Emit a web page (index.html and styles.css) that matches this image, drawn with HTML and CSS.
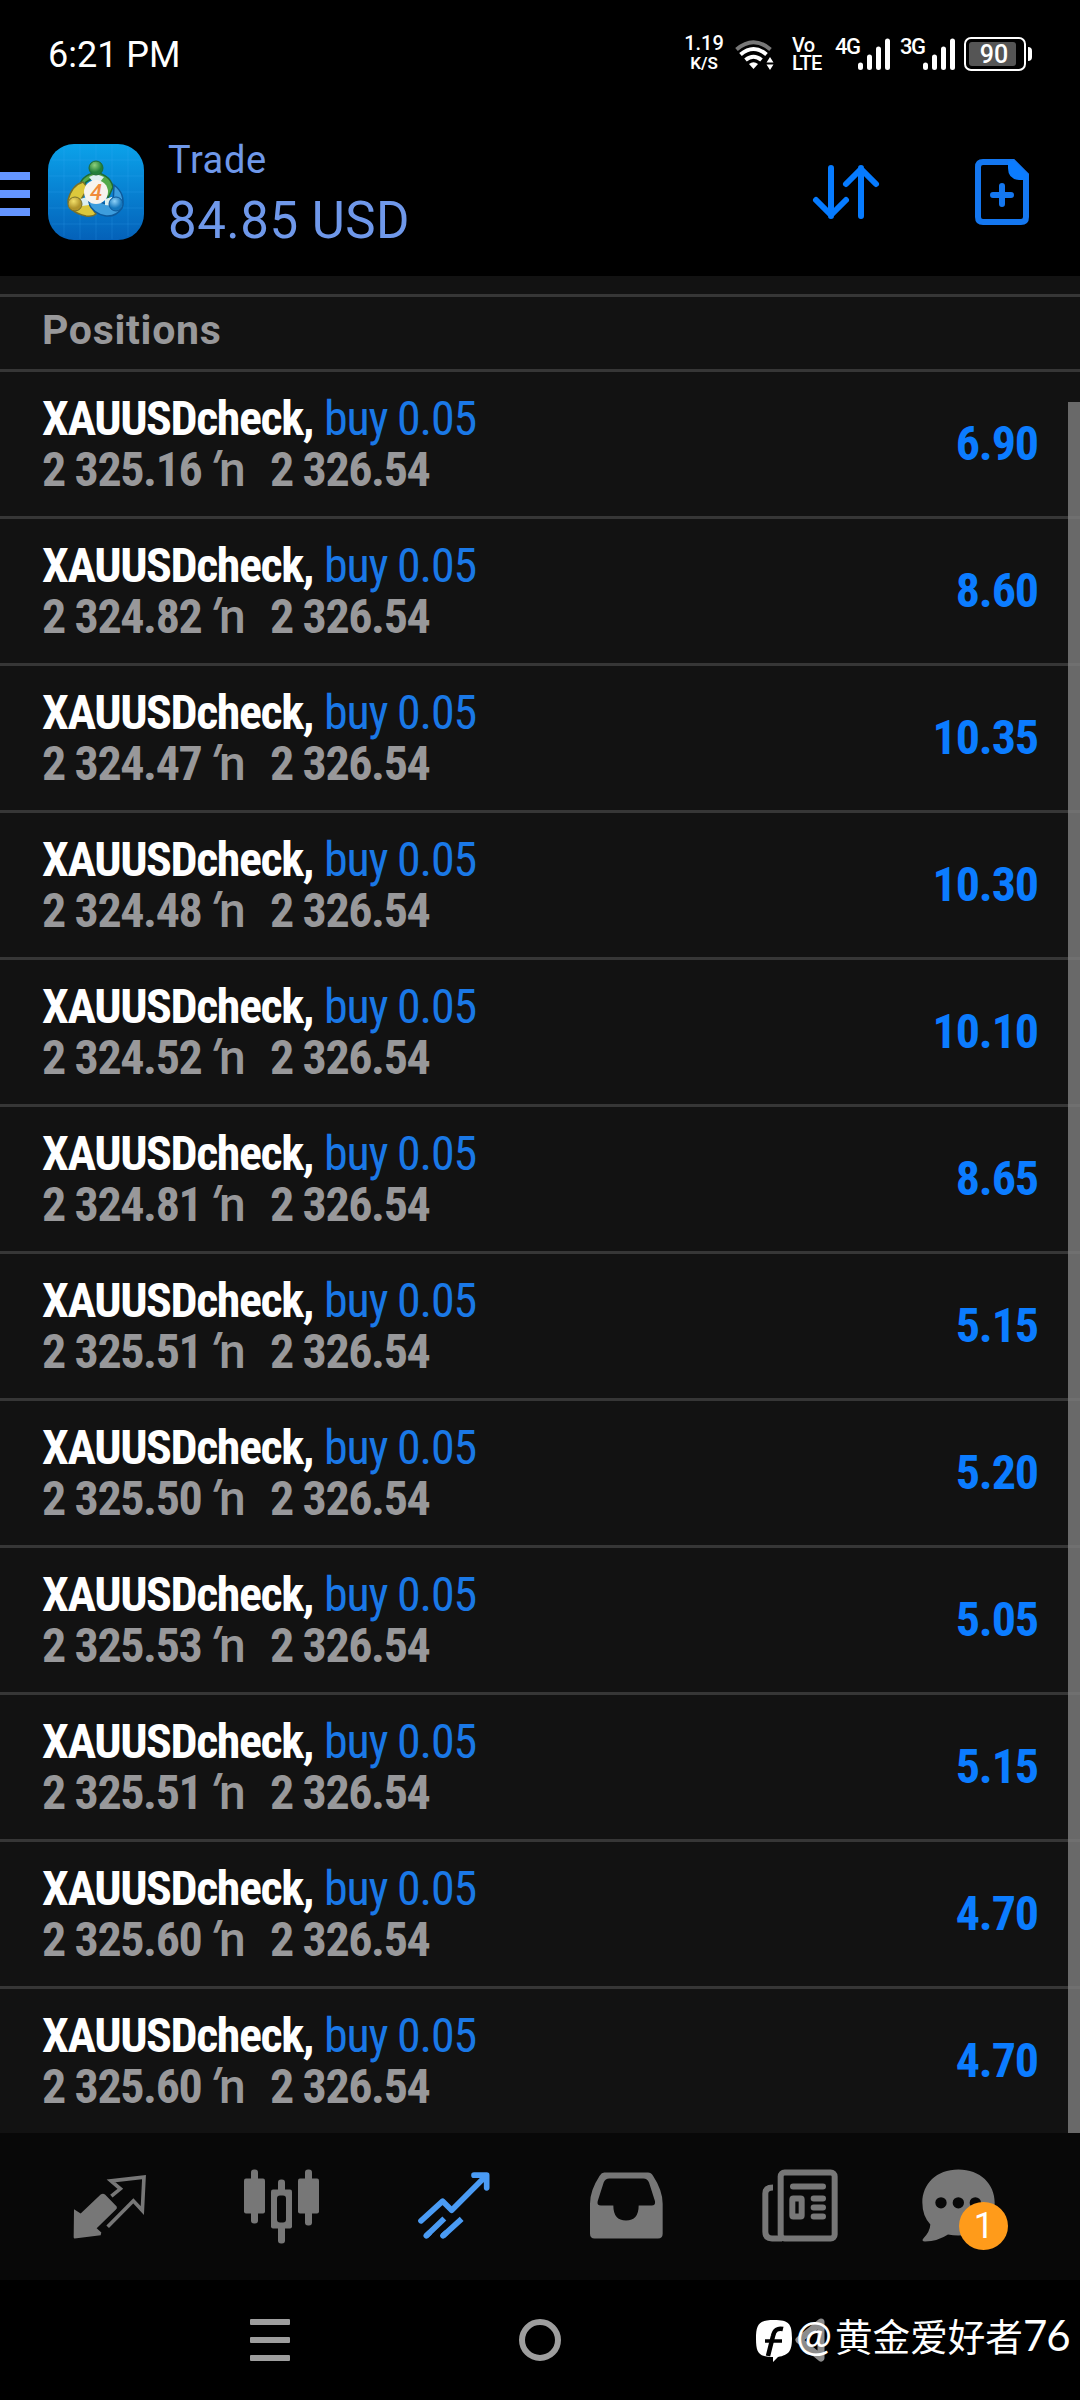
FILE: index.html
```html
<!DOCTYPE html>
<html lang="en">
<head>
    <meta charset="UTF-8">
    <meta name="viewport" content="width=device-width, initial-scale=1.0">
    <title>Trade</title>
    <link rel="stylesheet" href="styles.css">
</head>
<body>

    <div class="status-bar">
        <span class="time">6:21 PM</span>
        <div class="status-icons">
            <div class="stacked speed"><span>1.19</span><span class="small">K/S</span></div>
            <svg class="wifi" width="40" height="34" viewBox="0 0 40 34">
                <g fill="none" stroke="#fff" stroke-width="4">
                    <path d="M1.500 12.500 Q18.500 -2 35.500 12.500" stroke="#777"/>
                    <path d="M5.500 17.500 Q18.500 6.500 31.500 17.500"/>
                    <path d="M10.500 23 Q18.500 16.500 26.500 23"/>
                </g>
                <path d="M14 27 Q18.500 23.500 23 27 L18.500 32Z" fill="#fff"/>
                <path d="M31.500 25.500 L35 20 L38.500 25.500Z M31.500 27.500 L35 33 L38.500 27.500Z" fill="#fff"/>
            </svg>
            <div class="stacked volte"><span>Vo</span><span>LTE</span></div>
            <div class="signal">
                <span>4G</span>
                <svg width="32" height="34" viewBox="0 0 32 34"><path d="M2.500 28v2.500M11.500 20v10.500M20.500 12v18.500M29.500 4v26.500" stroke="#fff" stroke-width="5" stroke-linecap="round"/></svg>
            </div>
            <div class="signal second">
                <span>3G</span>
                <svg width="32" height="34" viewBox="0 0 32 34"><path d="M2.500 28v2.500M11.500 20v10.500M20.500 12v18.500M29.500 4v26.500" stroke="#fff" stroke-width="5" stroke-linecap="round"/></svg>
            </div>
            <div class="battery"><span>90</span></div>
            <div class="battery-tip"></div>
        </div>
    </div>

    <header class="header">
        <div class="menu"><i></i><i></i><i></i></div>
        <svg class="logo" width="96" height="96" viewBox="0 0 96 96">
            <defs>
                <linearGradient id="sky" x1="0" y1="0" x2="0" y2="1"><stop offset="0" stop-color="#0ba2ea"/><stop offset="1" stop-color="#0461b9"/></linearGradient>
                <radialGradient id="green" cx=".4" cy=".3"><stop offset="0" stop-color="#8fd07c"/><stop offset="1" stop-color="#21803a"/></radialGradient>
                <radialGradient id="gold" cx=".4" cy=".3"><stop offset="0" stop-color="#f3e06a"/><stop offset="1" stop-color="#b1942b"/></radialGradient>
                <radialGradient id="blue" cx=".4" cy=".3"><stop offset="0" stop-color="#8fd2f8"/><stop offset="1" stop-color="#1577bd"/></radialGradient>
            </defs>
            <rect width="96" height="96" rx="26" fill="url(#sky)"/>
            <path d="M16 4v88M32 1v94M48 0v96M64 1v94M80 4v88M4 16h88M1 32h94M0 48h96M1 64h94M4 80h88" stroke="#47b4ff" stroke-opacity=".18"/>
            <path d="M31 50 A17 17 0 1 1 65 43 L60 54 L48 32 L38 38Z" fill="#54a94a" stroke="#1f6b35" stroke-width="1.500"/>
            <path d="M35 38 Q24 41 20 56 Q20 68 38 72 Q45 73 48 70 L40 58 L29 62 L40 44Z" fill="#dcc83c" stroke="#77702a" stroke-width="1.500"/>
            <path d="M66 41 Q78 50 74 64 Q68 73 58 72 Q45 70 40 58 L52 58 L65 62Z" fill="#3d9ddd" stroke="#0d5a9c" stroke-width="1.500"/>
            <path d="M41 33l7-3 8 3-4 5h-7zM32 55l7-2 2 8-7 1zM57 55l7-2 1 9-8-1z" fill="#dceff0"/>
            <circle cx="48" cy="24" r="7" fill="url(#green)" stroke="#1f6b35"/>
            <circle cx="27" cy="60" r="7" fill="url(#gold)" stroke="#77702a"/>
            <circle cx="68" cy="60" r="7" fill="url(#blue)" stroke="#0d5a9c"/>
            <circle cx="48" cy="48" r="12" fill="#f7f3ee"/>
            <text x="48" y="56" class="logo-digit">4</text>
        </svg>
        <div class="title">
            <span class="page">Trade</span>
            <span class="balance">84.85 USD</span>
        </div>
        <svg class="sort" width="70" height="66" viewBox="0 0 70 66" fill="none" stroke="#067bff" stroke-width="6" stroke-linecap="round" stroke-linejoin="round">
            <path d="M20 9v48M5 41l15 15 15-15M50 57V9M35 25l15-15 15 15"/>
        </svg>
        <svg class="new-order" width="54" height="66" viewBox="0 0 54 66">
            <path d="M8 3h30l13 13v42q0 5-5 5H8q-5 0-5-5V8q0-5 5-5z" fill="none" stroke="#1477f0" stroke-width="6"/>
            <path d="M33 2h6l14 14v5h-9q-11-1-11-12z" fill="#0b7cff"/>
            <path d="M27 27v18M18 36h18" stroke="#1477f0" stroke-width="6" stroke-linecap="round"/>
        </svg>
    </header>

    <main class="trade">
        <h2 class="section-title">Positions</h2>
        <div id="positions"></div>
        <div class="scrollbar"></div>
    </main>

    <nav class="tabs">
        <div class="tab">
            <svg viewBox="79 133.500 252 252" fill="#777">
                <path d="M103 266l20 13 60-57q7-5 13 0l35 36q3 5-3 10l-57 55 14 13-2 8-78 10q-3 0-3-4z"/>
                <path d="M215 227l27-22-28-24 99-11-5 100-27-29-77 78" fill="none" stroke="#777" stroke-width="11"/>
            </svg>
        </div>
        <div class="tab">
            <svg viewBox="597 133.500 252 252" fill="#777">
                <rect x="633" y="147" width="21" height="162" rx="9"/><rect x="612" y="174" width="63" height="105" rx="6"/>
                <rect x="795" y="147" width="21" height="168" rx="9"/><rect x="774" y="174" width="63" height="105" rx="6"/>
                <rect x="714" y="177" width="21" height="192" rx="9"/><rect x="693" y="207" width="63" height="117" rx="6"/>
                <rect x="711" y="225" width="27" height="81" rx="9" fill="#080808"/>
            </svg>
        </div>
        <div class="tab">
            <svg viewBox="95 133.500 252 252" fill="none" stroke="#4a9bf4" stroke-width="17" stroke-linecap="round" stroke-linejoin="round">
                <path d="M122 301l65-59 27 27 104-104M281 164h38v38"/>
                <path d="M138 346l54-52M188 346l56-51" stroke-linecap="butt"/>
                <path d="M138 346l8-8M188 346l8-8"/>
            </svg>
        </div>
        <div class="tab">
            <svg viewBox="613 133.500 252 252">
                <path d="M674 156h131q9 0 15 10 29 44 29 84v90q0 14-14 14H645q-14 0-14-14v-90q0-40 29-84 6-10 14-10z" fill="#777"/>
                <path d="M689 174h102q12 0 17 12l18 56q2 13-10 13h-39q0 45-38 45t-38-45h-37q-13 0-10-13l18-56q5-12 17-12z" fill="#080808"/>
            </svg>
        </div>
        <div class="tab">
            <svg viewBox="111 133.500 252 252" fill="none" stroke="#777" stroke-width="18">
                <rect x="182" y="156" width="162" height="198" rx="12"/>
                <path d="M159 201q-23 0-23 18v115q0 20 20 20h30"/>
                <path d="M219 198h90M281 234h28M281 261h28M281 288h28" stroke-linecap="round"/>
                <rect x="217" y="234" width="28" height="54" rx="3"/>
            </svg>
        </div>
        <div class="tab">
            <svg viewBox="629 133.500 252 252" fill="#777" overflow="visible">
                <path d="M714 147c66 0 109 44 109 99s-43 99-109 99q-16 0-31-3-30 20-69 21-12-1-5-9 20-21 21-42-24-26-24-66c0-55 42-99 108-99z"/>
                <g fill="#080808"><circle cx="662" cy="247" r="17"/><circle cx="714" cy="247" r="17"/><circle cx="765" cy="247" r="17"/></g>
            </svg>
            <span class="badge">1</span>
        </div>
    </nav>

    <div class="system-nav">
        <div class="nav-item"><div class="recents"><i></i><i></i><i></i></div></div>
        <div class="nav-item"><div class="home"></div></div>
        <div class="nav-item">
            <svg width="32" height="46" viewBox="0 0 32 46"><path d="M27 5L5 23l22 18z" fill="none" stroke="#8c8c8c" stroke-width="7" stroke-linejoin="round"/></svg>
        </div>
        <div class="watermark">
            <svg width="36" height="42" viewBox="0 0 36 42">
                <path d="M18 0c15 0 18 4 18 18 0 13-3 17-14 19l-5 5v-5C3 37 0 33 0 19 0 4 3 0 18 0z" fill="#fff"/>
                <path d="M27 9q-8-2-10 7l-5 20" fill="none" stroke="#000" stroke-width="4.500"/>
                <path d="M9 21h17" stroke="#000" stroke-width="3.500"/>
            </svg>
            <span class="at">@</span><span class="author">黄金爱好者</span><span class="digits">76</span>
        </div>
    </div>

    <script>
        const current = "2 326.54";
        const positions = [
            ["2 325.16", "6.90"],
            ["2 324.82", "8.60"],
            ["2 324.47", "10.35"],
            ["2 324.48", "10.30"],
            ["2 324.52", "10.10"],
            ["2 324.81", "8.65"],
            ["2 325.51", "5.15"],
            ["2 325.50", "5.20"],
            ["2 325.53", "5.05"],
            ["2 325.51", "5.15"],
            ["2 325.60", "4.70"],
            ["2 325.60", "4.70"]
        ];

        document.getElementById("positions").innerHTML = positions.map(([open, profit]) => `
            <div class="position">
                <div class="details">
                    <div class="line"><span class="symbol">XAUUSDcheck,</span><span class="side">buy 0.05</span></div>
                    <div class="line prices"><span class="open">${open}</span><span class="arrow"><i>'</i>n</span><span class="current">${current}</span></div>
                </div>
                <span class="profit">${profit}</span>
            </div>`).join("");
    </script>

</body>
</html>
```
FILE: styles.css
```css
* {
    box-sizing: border-box;
}

body {
    margin: 0;
    width: 1080px;
    height: 2400px;
    overflow: hidden;
    background-color: #000;
    color: #fff;
    font-family: Roboto, "Liberation Sans", sans-serif;
}

/* Status bar */
.status-bar {
    display: flex;
    justify-content: space-between;
    height: 108px;
    padding: 34px 48px 0 48px;
}

.time {
    font-size: 36px;
    line-height: 43px;
}

.status-icons {
    display: flex;
    align-items: flex-start;
    font-weight: 500;
}

.stacked {
    display: flex;
    flex-direction: column;
    font-size: 20px;
    line-height: 18px;
}

.speed {
    align-items: center;
    width: 38px;
    margin-right: 12px;
}

.speed .small {
    font-size: 17px;
    font-weight: 600;
    line-height: 22px;
}

.wifi {
    margin: 3px 17px 0 0;
}

.volte {
    width: 30px;
    margin: 2px 13px 0 0;
    letter-spacing: -0.8px;
}

.signal {
    display: flex;
    width: 55px;
    font-size: 22px;
    line-height: 26px;
    letter-spacing: -1.5px;
}

.signal span {
    width: 23px;
}

.signal svg {
    margin-top: 3px;
}

.signal.second {
    margin-left: 10px;
}

.battery {
    width: 62px;
    height: 34px;
    margin: 3px 0 0 9px;
    border: 2px solid #fff;
    border-radius: 7px;
    padding: 3px;
}

.battery span {
    display: block;
    width: 47px;
    height: 24px;
    padding-left: 3px;
    border-radius: 3px;
    background-color: #555;
    font-size: 25px;
    line-height: 25px;
    text-align: center;
}

.battery-tip {
    width: 4px;
    height: 14px;
    margin: 13px 0 0 2px;
    border-radius: 0 4px 4px 0;
    background-color: #fff;
}

/* Header */
.header {
    display: flex;
    align-items: flex-start;
    height: 168px;
    padding-top: 36px;
}

.menu {
    display: flex;
    flex-direction: column;
    gap: 10px;
    width: 30px;
    margin: 28px 18px 0 0;
}

.menu i {
    height: 8px;
    background-color: #6495ff;
}

.logo-digit {
    font-size: 22px;
    font-style: italic;
    font-weight: 500;
    text-anchor: middle;
    fill: #f08a3c;
}

.title {
    display: flex;
    flex-direction: column;
    width: 643px;
    margin-left: 24px;
    color: #6f98ea;
}

.page {
    font-size: 38px;
    line-height: 44px;
    margin-top: -6px;
    letter-spacing: 0.6px;
}

.balance {
    font-size: 51px;
    line-height: 60px;
    margin-top: 9px;
    letter-spacing: 0.5px;
}

.sort {
    margin-top: 15px;
}

.new-order {
    margin: 15px 0 0 94px;
}

/* Open positions */
.trade {
    position: relative;
    height: 1857px;
    padding-top: 18px;
    background-color: #121212;
    overflow: hidden;
}

.section-title {
    height: 75px;
    margin: 0;
    padding-left: 42px;
    border-top: 3px solid #363636;
    color: #98989a;
    font-size: 41px;
    font-weight: 700;
    line-height: 67px;
    letter-spacing: 0.7px;
}

.position {
    display: flex;
    justify-content: space-between;
    height: 147px;
    padding: 21px 42px 0 42px;
    border-top: 3px solid #363636;
    font-size: 48px;
    font-family: "Roboto Condensed", Roboto, sans-serif;
    font-stretch: condensed;
}

.line {
    display: flex;
    height: 51px;
    line-height: 52px;
    white-space: pre;
}

.symbol {
    width: 282px;
    font-weight: 700;
    letter-spacing: -1.45px;
}

.side {
    color: #1a78e6;
    letter-spacing: -1.2px;
}

.prices {
    color: #98989a;
    font-weight: 700;
    letter-spacing: -1.4px;
}

.open {
    width: 167px;
}

.arrow {
    width: 61px;
    font-family: Roboto, sans-serif;
    font-stretch: normal;
    font-weight: 500;
    letter-spacing: 0;
}

.arrow i {
    display: inline-block;
    width: 10px;
    font-style: normal;
    font-weight: 700;
    transform: skewX(-20deg);
}

.profit {
    margin-top: 25px;
    line-height: 51px;
    color: #0b7cff;
    font-weight: 700;
    letter-spacing: -1.1px;
}

.scrollbar {
    position: absolute;
    top: 126px;
    right: 0;
    bottom: 0;
    width: 12px;
    background-color: rgba(128, 128, 128, 0.8);
}

/* Bottom tabs */
.tabs {
    display: flex;
    height: 147px;
    padding: 0 22px;
    background-color: #080808;
}

.tab {
    position: relative;
    display: flex;
    flex: 1;
    align-items: center;
    justify-content: center;
}

.tab svg {
    width: 84px;
    height: 84px;
}

.badge {
    position: absolute;
    left: 74px;
    top: 69px;
    width: 49px;
    height: 48px;
    border-radius: 50%;
    background-color: #ff9b1a;
    font-size: 36px;
    line-height: 48px;
    text-align: center;
}

/* System navigation */
.system-nav {
    position: relative;
    display: flex;
    height: 120px;
    padding: 0 135px;
}

.nav-item {
    display: flex;
    flex: 1;
    align-items: center;
    justify-content: center;
}

.recents {
    display: flex;
    flex-direction: column;
    gap: 12px;
    width: 40px;
}

.recents i {
    height: 6px;
    border-radius: 1px;
    background-color: #9e9e9e;
}

.home {
    width: 42px;
    height: 42px;
    border: 6px solid #9e9e9e;
    border-radius: 50%;
}

.watermark {
    position: absolute;
    left: 756px;
    top: 33px;
    display: flex;
    height: 52px;
    font-family: "Noto Sans CJK SC", sans-serif;
    font-size: 37.6px;
    line-height: 44px;
    white-space: nowrap;
}

.watermark svg {
    margin-top: 7px;
}

.at {
    width: 43px;
    padding-left: 4px;
    font-family: Lato, sans-serif;
    font-size: 43px;
}

.digits {
    font-family: Lato, sans-serif;
    font-size: 42px;
    letter-spacing: -1px;
}
```
